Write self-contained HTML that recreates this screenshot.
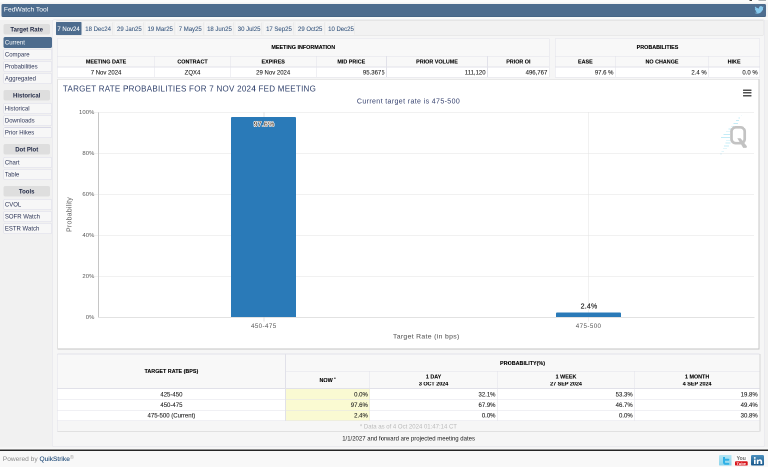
<!DOCTYPE html>
<html><head><meta charset="utf-8">
<style>
html,body{margin:0;padding:0;}
body{width:768px;height:467px;position:relative;overflow:hidden;background:#f7f7f7;font-family:"Liberation Sans",sans-serif;color:#222;}
#o{position:absolute;left:0;top:0;width:1536px;height:934px;transform:scale(0.5);transform-origin:0 0;will-change:transform;overflow:hidden;background:#f7f7f7;}
#z{position:absolute;left:0;top:0;width:768px;height:467px;zoom:2;}
.a{position:absolute;box-sizing:border-box;white-space:nowrap;}
.hdr{background:#4d6c8e;border-radius:1.5px;color:#fff;font-size:6.7px;padding-left:2.4px;}
.sh{background:#dedede;border-radius:2px;font-weight:bold;font-size:6px;text-align:center;color:#1f2744;}
.si{background:#f7f7f7;border:0.5px solid #d8d8e6;border-radius:1.5px;font-size:6px;padding-left:1.1px;color:#2d3557;}
.si.on{background:#4d6c8e;border-color:#4d6c8e;color:#fff;}
.tab{background:#f3f3f3;border:0.5px solid #f9f9f9;border-right-color:#e3e3e3;font-size:6px;text-align:center;color:#36567f;border-radius:0.5px;overflow:hidden;-webkit-text-stroke:0.08px #36567f;}
.tab.on{background:#4d6c8e;color:#fff;border-color:#4d6c8e;-webkit-text-stroke:0.08px #fff;}
.th{font-weight:bold;font-size:5.4px;color:#000;-webkit-text-stroke:0.08px #000;text-align:center;background:#f8f8f8;}
.td{font-size:6px;color:#222;background:#fff;-webkit-text-stroke:0.1px #222;}
.r{text-align:right;padding-right:1.9px;}
.c{text-align:center;}
.y{background:#fafad2;}
.yl{text-align:right;font-size:5.9px;line-height:8px;color:#555;letter-spacing:0.1px;}
</style></head><body><div id="o"><div id="z">

<div class="a " style="left:0.00px;top:0.00px;width:768.00px;height:2.50px;background:#fbfbfb;"></div>
<div class="a " style="left:749.30px;top:0.00px;width:2.60px;height:0.90px;background:#444;"></div>
<div class="a " style="left:758.40px;top:0.00px;width:7.40px;height:1.10px;background:#a9b0b4;"></div>
<div class="a " style="left:0.00px;top:2.50px;width:768.00px;height:14.50px;background:#f3f3f3;"></div>
<div class="a " style="left:0.00px;top:17.00px;width:768.00px;height:3.00px;background:#f9f9f9;"></div>
<div class="a hdr" style="left:1.50px;top:3.90px;width:764.70px;height:13.10px;line-height:11.4px;border-bottom:0.7px solid #3f5d7d;">FedWatch Tool</div>
<svg class="a" style="left:754.3px;top:6.2px;width:9.2px;height:8px;" viewBox="0 0 24 20"><path fill="#86c9ee" d="M24 2.4c-.9.4-1.8.7-2.8.8 1-.6 1.8-1.600 2.200-2.700-1 .6-2 1-3.100 1.200C19.300.700 18 0 16.600 0c-2.700 0-4.900 2.200-4.900 4.900 0 .4 0 .8.100 1.100C7.700 5.800 4.100 3.900 1.700.9 1.200 1.700 1 2.500 1 3.400c0 1.700.9 3.200 2.200 4.100-.8 0-1.600-.2-2.200-.6v.1c0 2.400 1.700 4.400 3.900 4.800-.4.100-.8.200-1.300.2-.3 0-.6 0-.9-.1.600 2 2.400 3.400 4.600 3.400-1.700 1.300-3.800 2.100-6.100 2.100-.4 0-.8 0-1.200-.1 2.200 1.400 4.800 2.200 7.500 2.200 9.100 0 14-7.500 14-14v-.6c1-.7 1.800-1.600 2.500-2.500z"/></svg>
<div class="a " style="left:0.00px;top:20.00px;width:768.00px;height:427.60px;background:#f1f1f1;"></div>
<div class="a sh" style="left:3.30px;top:24.00px;width:46.80px;height:10.40px;line-height:11.4px;">Target Rate</div>
<div class="a si on" style="left:3.30px;top:37.00px;width:48.60px;height:10.90px;line-height:10.4px;">Current</div>
<div class="a si" style="left:3.30px;top:49.00px;width:48.60px;height:10.90px;line-height:10.4px;">Compare</div>
<div class="a si" style="left:3.30px;top:61.00px;width:48.60px;height:10.90px;line-height:10.4px;">Probabilities</div>
<div class="a si" style="left:3.30px;top:73.00px;width:48.60px;height:10.90px;line-height:10.4px;">Aggregated</div>
<div class="a sh" style="left:3.30px;top:90.00px;width:46.80px;height:10.40px;line-height:11.4px;">Historical</div>
<div class="a si" style="left:3.30px;top:103.00px;width:48.60px;height:10.90px;line-height:10.4px;">Historical</div>
<div class="a si" style="left:3.30px;top:115.00px;width:48.60px;height:10.90px;line-height:10.4px;">Downloads</div>
<div class="a si" style="left:3.30px;top:127.00px;width:48.60px;height:10.90px;line-height:10.4px;">Prior Hikes</div>
<div class="a sh" style="left:3.30px;top:144.00px;width:46.80px;height:10.40px;line-height:11.4px;">Dot Plot</div>
<div class="a si" style="left:3.30px;top:157.00px;width:48.60px;height:10.90px;line-height:10.4px;">Chart</div>
<div class="a si" style="left:3.30px;top:169.00px;width:48.60px;height:10.90px;line-height:10.4px;">Table</div>
<div class="a sh" style="left:3.30px;top:186.20px;width:46.80px;height:10.40px;line-height:11.4px;">Tools</div>
<div class="a si" style="left:3.30px;top:199.20px;width:48.60px;height:10.90px;line-height:10.4px;">CVOL</div>
<div class="a si" style="left:3.30px;top:211.20px;width:48.60px;height:10.90px;line-height:10.4px;">SOFR Watch</div>
<div class="a si" style="left:3.30px;top:223.20px;width:48.60px;height:10.90px;line-height:10.4px;">ESTR Watch</div>
<div class="a " style="left:51.90px;top:19.60px;width:712.90px;height:427.30px;background:#f6f6f6;border:0.6px solid #e0e0e8;border-radius:2px;"></div>
<div class="a " style="left:55.80px;top:19.80px;width:708.20px;height:15.80px;background:#f2f2f2;border:0.5px solid #e6e6e6;border-top:1px solid #e5e5e5;border-bottom:0.6px solid #dcdcdc;border-radius:1.5px;"></div>
<div class="a tab on" style="left:55.80px;top:21.90px;width:25.50px;height:13.30px;line-height:13px;">7 Nov24</div>
<div class="a tab" style="left:83.70px;top:21.90px;width:28.80px;height:13.30px;line-height:13px;">18 Dec24</div>
<div class="a tab" style="left:115.40px;top:21.90px;width:27.90px;height:13.30px;line-height:13px;">29 Jan25</div>
<div class="a tab" style="left:145.80px;top:21.90px;width:28.80px;height:13.30px;line-height:13px;">19 Mar25</div>
<div class="a tab" style="left:176.70px;top:21.90px;width:27.00px;height:13.30px;line-height:13px;">7 May25</div>
<div class="a tab" style="left:205.60px;top:21.90px;width:27.70px;height:13.30px;line-height:13px;">18 Jun25</div>
<div class="a tab" style="left:236.20px;top:21.90px;width:25.80px;height:13.30px;line-height:13px;">30 Jul25</div>
<div class="a tab" style="left:264.60px;top:21.90px;width:28.70px;height:13.30px;line-height:13px;">17 Sep25</div>
<div class="a tab" style="left:295.80px;top:21.90px;width:28.80px;height:13.30px;line-height:13px;">29 Oct25</div>
<div class="a tab" style="left:326.70px;top:21.90px;width:28.50px;height:13.30px;line-height:13px;">10 Dec25</div>
<div class="a th" style="left:57.30px;top:38.30px;width:491.90px;height:18.00px;line-height:17.2px;">MEETING INFORMATION</div>
<div class="a th" style="left:57.30px;top:56.30px;width:97.50px;height:10.70px;line-height:10.4px;">MEETING DATE</div>
<div class="a td c" style="left:57.30px;top:67.00px;width:97.50px;height:10.40px;line-height:11.2px;">7 Nov 2024</div>
<div class="a th" style="left:154.80px;top:56.30px;width:75.40px;height:10.70px;line-height:10.4px;">CONTRACT</div>
<div class="a td c" style="left:154.80px;top:67.00px;width:75.40px;height:10.40px;line-height:11.2px;">ZQX4</div>
<div class="a th" style="left:230.20px;top:56.30px;width:86.00px;height:10.70px;line-height:10.4px;">EXPIRES</div>
<div class="a td c" style="left:230.20px;top:67.00px;width:86.00px;height:10.40px;line-height:11.2px;">29 Nov 2024</div>
<div class="a th" style="left:316.20px;top:56.30px;width:70.30px;height:10.70px;line-height:10.4px;">MID PRICE</div>
<div class="a td r" style="left:316.20px;top:67.00px;width:70.30px;height:10.40px;line-height:11.2px;">95.3675</div>
<div class="a th" style="left:386.50px;top:56.30px;width:101.00px;height:10.70px;line-height:10.4px;">PRIOR VOLUME</div>
<div class="a td r" style="left:386.50px;top:67.00px;width:101.00px;height:10.40px;line-height:11.2px;">111,120</div>
<div class="a th" style="left:487.50px;top:56.30px;width:61.70px;height:10.70px;line-height:10.4px;">PRIOR OI</div>
<div class="a td r" style="left:487.50px;top:67.00px;width:61.70px;height:10.40px;line-height:11.2px;">496,767</div>
<div class="a " style="left:57.30px;top:38.00px;width:491.90px;height:0.60px;background:#e1e1e9;"></div>
<div class="a " style="left:57.30px;top:56.00px;width:491.90px;height:0.60px;background:#e1e1e9;"></div>
<div class="a " style="left:57.30px;top:66.70px;width:491.90px;height:0.60px;background:#e1e1e9;"></div>
<div class="a " style="left:57.30px;top:77.10px;width:491.90px;height:0.60px;background:#e1e1e9;"></div>
<div class="a " style="left:57.00px;top:38.30px;width:0.60px;height:39.10px;background:#e1e1e9;"></div>
<div class="a " style="left:548.90px;top:38.30px;width:0.60px;height:39.10px;background:#e1e1e9;"></div>
<div class="a " style="left:154.50px;top:56.30px;width:0.60px;height:21.10px;background:#e1e1e9;"></div>
<div class="a " style="left:229.90px;top:56.30px;width:0.60px;height:21.10px;background:#e1e1e9;"></div>
<div class="a " style="left:315.90px;top:56.30px;width:0.60px;height:21.10px;background:#e1e1e9;"></div>
<div class="a " style="left:386.20px;top:56.30px;width:0.60px;height:21.10px;background:#e1e1e9;"></div>
<div class="a " style="left:487.20px;top:56.30px;width:0.60px;height:21.10px;background:#e1e1e9;"></div>
<div class="a th" style="left:555.40px;top:38.30px;width:204.20px;height:18.00px;line-height:17.2px;">PROBABILITIES</div>
<div class="a th" style="left:555.40px;top:56.30px;width:60.00px;height:10.70px;line-height:10.4px;">EASE</div>
<div class="a td r" style="left:555.40px;top:67.00px;width:60.00px;height:10.40px;line-height:11.2px;">97.6 %</div>
<div class="a th" style="left:615.40px;top:56.30px;width:93.20px;height:10.70px;line-height:10.4px;">NO CHANGE</div>
<div class="a td r" style="left:615.40px;top:67.00px;width:93.20px;height:10.40px;line-height:11.2px;">2.4 %</div>
<div class="a th" style="left:708.60px;top:56.30px;width:51.00px;height:10.70px;line-height:10.4px;">HIKE</div>
<div class="a td r" style="left:708.60px;top:67.00px;width:51.00px;height:10.40px;line-height:11.2px;">0.0 %</div>
<div class="a " style="left:555.40px;top:38.00px;width:204.20px;height:0.60px;background:#e1e1e9;"></div>
<div class="a " style="left:555.40px;top:56.00px;width:204.20px;height:0.60px;background:#e1e1e9;"></div>
<div class="a " style="left:555.40px;top:66.70px;width:204.20px;height:0.60px;background:#e1e1e9;"></div>
<div class="a " style="left:555.40px;top:77.10px;width:204.20px;height:0.60px;background:#e1e1e9;"></div>
<div class="a " style="left:555.10px;top:38.30px;width:0.60px;height:39.10px;background:#e1e1e9;"></div>
<div class="a " style="left:759.30px;top:38.30px;width:0.60px;height:39.10px;background:#e1e1e9;"></div>
<div class="a " style="left:615.10px;top:56.30px;width:0.60px;height:21.10px;background:#e1e1e9;"></div>
<div class="a " style="left:708.30px;top:56.30px;width:0.60px;height:21.10px;background:#e1e1e9;"></div>
<div class="a " style="left:57.30px;top:78.90px;width:702.20px;height:270.70px;background:#fff;border:0.8px solid #cdcdcd;border-top:0.9px solid #d2d2d2;border-right:1px solid #c8c8c8;border-bottom:1px solid #c4c4c4;"></div>
<div class="a" style="left:62.9px;top:82.9px;font-size:8px;line-height:12px;color:#2f406b;letter-spacing:0.27px;">TARGET RATE PROBABILITIES FOR 7 NOV 2024 FED MEETING</div>
<div class="a" style="left:356.9px;top:96.2px;font-size:7px;line-height:10px;color:#34406e;letter-spacing:0.38px;">Current target rate is 475-500</div>
<div class="a " style="left:742.80px;top:89.25px;width:8.90px;height:1.50px;background:#505050;border-radius:0.4px;"></div>
<div class="a " style="left:742.80px;top:92.00px;width:8.90px;height:1.50px;background:#505050;border-radius:0.4px;"></div>
<div class="a " style="left:742.80px;top:94.75px;width:8.90px;height:1.50px;background:#505050;border-radius:0.4px;"></div>
<div class="a " style="left:95.20px;top:111.95px;width:659.00px;height:0.70px;background:#e3e3e3;"></div>
<div class="a " style="left:95.20px;top:152.95px;width:659.00px;height:0.70px;background:#e3e3e3;"></div>
<div class="a " style="left:95.20px;top:193.95px;width:659.00px;height:0.70px;background:#e3e3e3;"></div>
<div class="a " style="left:95.20px;top:234.95px;width:659.00px;height:0.70px;background:#e3e3e3;"></div>
<div class="a " style="left:95.20px;top:275.95px;width:659.00px;height:0.70px;background:#e3e3e3;"></div>
<div class="a " style="left:263.70px;top:112.30px;width:0.60px;height:209.20px;background:#e3e3e3;"></div>
<div class="a " style="left:588.30px;top:112.30px;width:0.60px;height:209.20px;background:#e3e3e3;"></div>
<div class="a " style="left:98.10px;top:112.30px;width:0.80px;height:205.30px;background:#c6c6c6;"></div>
<div class="a " style="left:98.20px;top:316.85px;width:656.10px;height:0.90px;background:#c4c4c4;"></div>
<div class="a yl" style="left:60.00px;top:108.00px;width:34.50px;height:8.00px;">100%</div>
<div class="a yl" style="left:60.00px;top:149.00px;width:34.50px;height:8.00px;">80%</div>
<div class="a yl" style="left:60.00px;top:190.00px;width:34.50px;height:8.00px;">60%</div>
<div class="a yl" style="left:60.00px;top:231.00px;width:34.50px;height:8.00px;">40%</div>
<div class="a yl" style="left:60.00px;top:272.00px;width:34.50px;height:8.00px;">20%</div>
<div class="a yl" style="left:60.00px;top:313.00px;width:34.50px;height:8.00px;">0%</div>
<div class="a" style="left:49px;top:210px;width:40px;height:9px;font-size:7px;line-height:9px;color:#606060;text-align:center;letter-spacing:0.2px;transform:rotate(-90deg);transform-origin:center;">Probability</div>
<div class="a " style="left:231.20px;top:117.10px;width:65.00px;height:200.00px;background:#2a7ab8;border-radius:1px 1px 0 0;"></div>
<div class="a " style="left:556.20px;top:312.40px;width:65.00px;height:4.70px;background:#2a7ab8;border-radius:1px 1px 0 0;"></div>
<div class="a" style="left:244px;top:119.3px;width:40px;text-align:center;font-size:7px;line-height:9px;color:#5a4c40;font-weight:normal;-webkit-text-stroke:0.12px #5a4c40;letter-spacing:0.2px;text-shadow:0 0 0.6px #fff,0.5px 0.5px 0 #fff,-0.5px -0.5px 0 #fff,0.5px -0.5px 0 #fff,-0.5px 0.5px 0 #fff,0.5px 0 0 #fff,-0.5px 0 0 #fff,0 0.5px 0 #fff,0 -0.5px 0 #fff;">97.6%</div>
<div class="a" style="left:569px;top:301.4px;width:40px;text-align:center;font-size:7px;line-height:9px;color:#222;letter-spacing:0.2px;-webkit-text-stroke:0.15px #222;">2.4%</div>
<div class="a" style="left:243.8px;top:321.8px;width:40px;text-align:center;font-size:6.2px;line-height:8px;color:#555;letter-spacing:0.42px;">450-475</div>
<div class="a" style="left:568.6px;top:321.8px;width:40px;text-align:center;font-size:6.2px;line-height:8px;color:#555;letter-spacing:0.42px;">475-500</div>
<div class="a" style="left:376.3px;top:331.6px;width:100px;text-align:center;font-size:6.8px;line-height:10px;color:#5c5c5c;letter-spacing:0.35px;-webkit-text-stroke:0.08px #5c5c5c;">Target Rate (in bps)</div>
<div class="a " style="left:740.78px;top:114.83px;width:0.90px;height:0.90px;background:#c4ecf7;"></div>
<div class="a " style="left:738.59px;top:117.40px;width:1.54px;height:0.90px;background:#c4ecf7;"></div>
<div class="a " style="left:736.02px;top:120.23px;width:3.08px;height:0.90px;background:#c4ecf7;"></div>
<div class="a " style="left:733.32px;top:122.93px;width:4.50px;height:0.90px;background:#c4ecf7;"></div>
<div class="a " style="left:730.88px;top:125.76px;width:3.08px;height:0.90px;background:#c4ecf7;"></div>
<div class="a " style="left:728.57px;top:128.59px;width:2.57px;height:0.90px;background:#c4ecf7;"></div>
<div class="a " style="left:725.99px;top:131.29px;width:4.50px;height:0.90px;background:#c4ecf7;"></div>
<div class="a " style="left:723.42px;top:134.11px;width:6.68px;height:0.90px;background:#c4ecf7;"></div>
<div class="a " style="left:720.85px;top:136.94px;width:9.25px;height:0.90px;background:#c4ecf7;"></div>
<div class="a " style="left:725.99px;top:139.77px;width:4.50px;height:0.90px;background:#c4ecf7;"></div>
<div class="a " style="left:725.35px;top:142.60px;width:5.14px;height:0.90px;background:#c4ecf7;"></div>
<div class="a " style="left:724.07px;top:145.42px;width:5.14px;height:0.90px;background:#c4ecf7;"></div>
<div class="a " style="left:722.78px;top:148.25px;width:4.24px;height:0.90px;background:#c4ecf7;"></div>
<div class="a " style="left:721.50px;top:150.82px;width:2.57px;height:0.90px;background:#c4ecf7;"></div>
<div class="a " style="left:720.60px;top:153.65px;width:1.03px;height:0.90px;background:#c4ecf7;"></div>
<svg class="a" style="left:726px;top:122px;width:26px;height:30px;" viewBox="0 0 26 30">
<rect x="5.5" y="5.3" width="13.2" height="15.9" rx="4.2" ry="4.2" fill="none" stroke="#c3c3c3" stroke-width="2.7"/>
<path d="M11.3 16.2 L14.6 16.2 L21 24.4 L20.4 25.9 L17.2 25.9 Z" fill="#c2c2c2"/>
</svg>
<div class="a th" style="left:57.30px;top:354.00px;width:228.20px;height:34.50px;line-height:34.9px;">TARGET RATE (BPS)</div>
<div class="a th" style="left:285.50px;top:354.00px;width:474.10px;height:17.30px;line-height:18.2px;">PROBABILITY(%)</div>
<div class="a th" style="left:285.50px;top:371.30px;width:84.20px;height:17.20px;line-height:14.8px;">NOW <span style="font-size:4px;vertical-align:2px;">*</span></div>
<div class="a th" style="left:369.70px;top:371.30px;width:127.70px;height:17.20px;line-height:6.8px;padding-top:2.3px;">1 DAY<br>3 OCT 2024</div>
<div class="a th" style="left:497.40px;top:371.30px;width:137.20px;height:17.20px;line-height:6.8px;padding-top:2.3px;">1 WEEK<br>27 SEP 2024</div>
<div class="a th" style="left:634.60px;top:371.30px;width:125.00px;height:17.20px;line-height:6.8px;padding-top:2.3px;">1 MONTH<br>4 SEP 2024</div>
<div class="a td c" style="left:57.30px;top:388.50px;width:228.20px;height:10.70px;line-height:12.1px;">425-450</div>
<div class="a td r y" style="left:285.50px;top:388.50px;width:84.20px;height:10.70px;line-height:12.1px;">0.0%</div>
<div class="a td r" style="left:369.70px;top:388.50px;width:127.70px;height:10.70px;line-height:12.1px;">32.1%</div>
<div class="a td r" style="left:497.40px;top:388.50px;width:137.20px;height:10.70px;line-height:12.1px;">53.3%</div>
<div class="a td r" style="left:634.60px;top:388.50px;width:125.00px;height:10.70px;line-height:12.1px;">19.8%</div>
<div class="a td c" style="left:57.30px;top:399.20px;width:228.20px;height:10.90px;line-height:12.3px;">450-475</div>
<div class="a td r y" style="left:285.50px;top:399.20px;width:84.20px;height:10.90px;line-height:12.3px;">97.6%</div>
<div class="a td r" style="left:369.70px;top:399.20px;width:127.70px;height:10.90px;line-height:12.3px;">67.9%</div>
<div class="a td r" style="left:497.40px;top:399.20px;width:137.20px;height:10.90px;line-height:12.3px;">46.7%</div>
<div class="a td r" style="left:634.60px;top:399.20px;width:125.00px;height:10.90px;line-height:12.3px;">49.4%</div>
<div class="a td c" style="left:57.30px;top:410.10px;width:228.20px;height:10.50px;line-height:11.9px;">475-500 (Current)</div>
<div class="a td r y" style="left:285.50px;top:410.10px;width:84.20px;height:10.50px;line-height:11.9px;">2.4%</div>
<div class="a td r" style="left:369.70px;top:410.10px;width:127.70px;height:10.50px;line-height:11.9px;">0.0%</div>
<div class="a td r" style="left:497.40px;top:410.10px;width:137.20px;height:10.50px;line-height:11.9px;">0.0%</div>
<div class="a td r" style="left:634.60px;top:410.10px;width:125.00px;height:10.50px;line-height:11.9px;">30.8%</div>
<div class="a " style="left:57.30px;top:420.60px;width:702.30px;height:10.70px;background:#f6f6f6;font-size:6px;line-height:12.2px;color:#b9b9b9;text-align:center;">* Data as of 4 Oct 2024 01:47:14 CT</div>
<div class="a " style="left:57.30px;top:353.70px;width:702.30px;height:0.60px;background:#e1e1e9;"></div>
<div class="a " style="left:57.30px;top:388.20px;width:702.30px;height:0.60px;background:#e1e1e9;"></div>
<div class="a " style="left:57.30px;top:398.90px;width:702.30px;height:0.60px;background:#e1e1e9;"></div>
<div class="a " style="left:57.30px;top:409.80px;width:702.30px;height:0.60px;background:#e1e1e9;"></div>
<div class="a " style="left:57.30px;top:420.30px;width:702.30px;height:0.60px;background:#e1e1e9;"></div>
<div class="a " style="left:285.50px;top:371.00px;width:474.10px;height:0.60px;background:#e1e1e9;"></div>
<div class="a " style="left:57.30px;top:430.85px;width:702.70px;height:0.90px;background:#cccccc;"></div>
<div class="a " style="left:57.00px;top:354.00px;width:0.60px;height:77.30px;background:#e1e1e9;"></div>
<div class="a " style="left:759.50px;top:354.00px;width:0.80px;height:77.30px;background:#d6d6d6;"></div>
<div class="a " style="left:285.20px;top:354.00px;width:0.60px;height:66.60px;background:#e1e1e9;"></div>
<div class="a " style="left:369.40px;top:371.30px;width:0.60px;height:49.30px;background:#e1e1e9;"></div>
<div class="a " style="left:497.10px;top:371.30px;width:0.60px;height:49.30px;background:#e1e1e9;"></div>
<div class="a " style="left:634.30px;top:371.30px;width:0.60px;height:49.30px;background:#e1e1e9;"></div>
<div class="a" style="left:308.6px;top:434.2px;width:200px;text-align:center;font-size:6px;line-height:9px;color:#222;">1/1/2027 and forward are projected meeting dates</div>
<div class="a " style="left:0.00px;top:447.60px;width:768.00px;height:19.40px;background:#f8f8f8;"></div>
<div class="a " style="left:0.00px;top:449.60px;width:768.00px;height:1.40px;background:#262626;"></div>
<div class="a" style="left:2.8px;top:451.9px;font-size:6.6px;line-height:10px;color:#8a8a8a;">Powered by <span style="color:#1f4a78;-webkit-text-stroke:0.1px #1f4a78;">QuikStrike</span><span style="font-size:5.4px;vertical-align:2.2px;color:#aaa;">&reg;</span></div>
<svg class="a" style="left:718.8px;top:454.8px;width:12.8px;height:10.7px;" viewBox="0 0 128 107">
<defs><linearGradient id="tg" x1="0" y1="0" x2="0" y2="1"><stop offset="0" stop-color="#b5e6f3"/><stop offset="1" stop-color="#8ad3ec"/></linearGradient>
<linearGradient id="lg" x1="0" y1="0" x2="0" y2="1"><stop offset="0" stop-color="#4a8fbd"/><stop offset="1" stop-color="#17568a"/></linearGradient></defs>
<rect x="0" y="0" width="128" height="107" rx="12" fill="url(#tg)"/>
<path d="M40 20 h20 v18 h34 a9 9 0 0 1 0 19 h-34 v14 a8 8 0 0 0 8 8 h26 a9 9 0 0 1 0 19 h-30 a24 24 0 0 1 -24 -24 z" fill="#2fb0e6"/>
</svg>
<svg class="a" style="left:734.6px;top:454.8px;width:13.5px;height:10.8px;" viewBox="0 0 135 108">
<rect x="0" y="0" width="135" height="108" rx="10" fill="#fdfdfd" stroke="#ececec" stroke-width="3"/>
<text x="67" y="50" text-anchor="middle" font-family="Liberation Sans, sans-serif" font-weight="bold" font-size="52" fill="#666" textLength="92" lengthAdjust="spacingAndGlyphs">You</text>
<rect x="5" y="62" width="127" height="44" rx="10" fill="#d8151c"/>
<text x="68" y="98" text-anchor="middle" font-family="Liberation Sans, sans-serif" font-weight="bold" font-size="40" fill="#fff" textLength="96" lengthAdjust="spacingAndGlyphs">Tube</text>
</svg>
<svg class="a" style="left:751px;top:454.8px;width:13px;height:10.7px;" viewBox="0 0 130 107">
<rect x="0" y="0" width="130" height="107" rx="14" fill="url(#lg)"/>
<rect x="30" y="46" width="16" height="44" fill="#fff"/><circle cx="38" cy="29" r="9.5" fill="#fff"/>
<path d="M58 46 h15 v7 c4 -6 10 -9 18 -9 c14 0 20 9 20 23 v23 h-16 v-21 c0 -7 -2 -12 -9 -12 c-8 0 -12 5 -12 13 v20 h-16 z" fill="#fff"/>
</svg>
</div></div></body></html>
